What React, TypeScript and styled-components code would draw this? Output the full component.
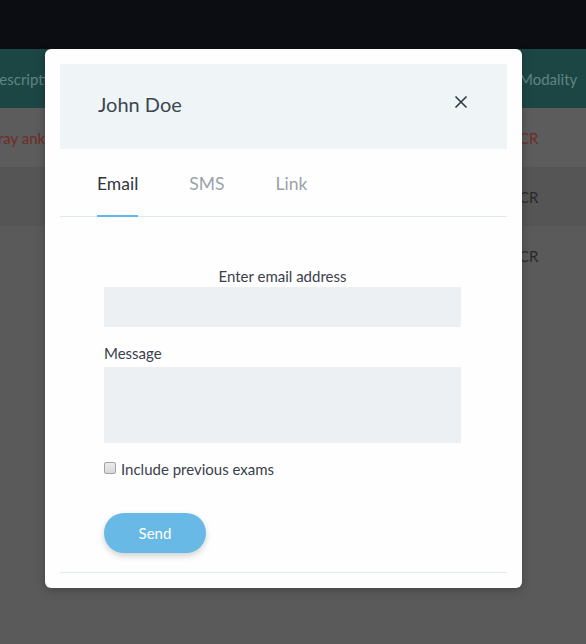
import React from "react";
import styled, { createGlobalStyle } from "styled-components";

const Global = createGlobalStyle`
  html, body { margin: 0; padding: 0; }
  body {
    width: 586px;
    height: 644px;
    overflow: hidden;
    background: #5a5a5a;
    font-family: Lato, "Open Sans", sans-serif;
  }
`;

const Page = styled.div`
  position: relative;
  width: 586px;
  height: 644px;
  overflow: hidden;
  background: #5a5a5a;
`;

const TopBar = styled.div`
  height: 49px;
  background: #0b0d13;
`;

const Row = styled.div<{ $bg: string; $h: number }>`
  display: flex;
  align-items: center;
  justify-content: space-between;
  height: ${(p) => p.$h}px;
  background: ${(p) => p.$bg};
  font-size: 15px;
`;

const Cell = styled.span<{ $color: string; $shift?: number }>`
  color: ${(p) => p.$color};
  margin-left: ${(p) => p.$shift ?? 0}px;
  white-space: nowrap;
`;

const EndCell = styled.span<{ $color: string }>`
  color: ${(p) => p.$color};
  width: 67px;
  white-space: nowrap;
`;

const Modal = styled.div`
  position: absolute;
  top: 49px;
  left: 45px;
  width: 477px;
  box-sizing: border-box;
  padding: 15px;
  background: #fefefe;
  border-radius: 6px;
  box-shadow: 0 2px 10px rgba(0, 0, 0, 0.25);
`;

const Header = styled.div`
  height: 85px;
  background: #eff4f7;
  display: flex;
  align-items: center;
  justify-content: space-between;
  padding: 0 39px 0 38px;
  box-sizing: border-box;
`;

const Title = styled.h2`
  margin: 0;
  font-size: 20px;
  font-weight: 400;
  color: #3d4550;
  padding-bottom: 6px;
`;

const Close = styled.button`
  border: 0;
  background: transparent;
  padding: 0;
  width: 14px;
  height: 14px;
  margin-bottom: 10px;
  display: flex;
  cursor: pointer;
`;

const Tabs = styled.div`
  display: flex;
  padding-left: 37px;
  height: 68px;
  border-bottom: 1px solid #e1e8ee;
  box-sizing: border-box;
`;

const Tab = styled.div<{ $active?: boolean }>`
  display: flex;
  align-items: center;
  margin-right: 51px;
  font-size: 17.5px;
  padding-top: 2px;
  color: ${(p) => (p.$active ? "#2f3640" : "#9aa2aa")};
  border-bottom: 2px solid ${(p) => (p.$active ? "#62b8e6" : "transparent")};
  margin-bottom: -1px;
`;

const Body = styled.form`
  display: flex;
  flex-direction: column;
  padding: 51px 46px 19px 44px;
  border-bottom: 1px solid #e1e8ee;
`;

const Label = styled.label<{ $center?: boolean; $gap: number }>`
  font-size: 15px;
  line-height: 17px;
  color: #3a414b;
  text-align: ${(p) => (p.$center ? "center" : "left")};
  margin-bottom: ${(p) => p.$gap}px;
`;

const Input = styled.input`
  box-sizing: border-box;
  height: 40px;
  padding: 0 10px;
  border: 0;
  background: #ecf0f3;
  margin: 0 0 18px;
`;

const TextArea = styled.textarea`
  box-sizing: border-box;
  height: 76px;
  padding: 8px 10px;
  border: 0;
  background: #ecf0f3;
  resize: none;
  margin: 0 0 18px;
`;

const CheckRow = styled.label`
  display: flex;
  align-items: center;
  gap: 5px;
  font-size: 15px;
  line-height: 17px;
  color: #3a414b;
  margin-bottom: 35px;
`;

const Check = styled.input`
  appearance: none;
  box-sizing: border-box;
  margin: 0 0 4px;
  width: 12px;
  height: 12px;
  border: 1px solid #a3a3a3;
  border-radius: 2px;
  background: linear-gradient(#ececec, #d8d8d8);
`;

const Send = styled.button`
  width: 102px;
  height: 40px;
  border: 0;
  border-radius: 20px;
  background: #68b9e5;
  color: #ffffff;
  font-family: Lato, sans-serif;
  font-size: 15px;
  box-shadow: 0 3px 6px rgba(0, 0, 0, 0.18);
  cursor: pointer;
`;

export default function App() {
  return (
    <Page>
      <Global />
      <TopBar />
      <Row $bg="#1c4644" $h={59}>
        <Cell $color="#5f8482" $shift={-12}>Description</Cell>
        <EndCell $color="#5f8482">Modality</EndCell>
      </Row>
      <Row $bg="#5c5c5c" $h={59}>
        <Cell $color="#6e2c27" $shift={-17}>X-ray ankle</Cell>
        <EndCell $color="#6e2c27">CR</EndCell>
      </Row>
      <Row $bg="#555555" $h={59}>
        <Cell $color="#2a2a2a" $shift={-17}></Cell>
        <EndCell $color="#2a2a2a">CR</EndCell>
      </Row>
      <Row $bg="#5a5a5a" $h={59}>
        <Cell $color="#2a2a2a" $shift={-17}></Cell>
        <EndCell $color="#2a2a2a">CR</EndCell>
      </Row>

      <Modal>
        <Header>
          <Title>John Doe</Title>
          <Close aria-label="Close">
            <svg width="14" height="14" viewBox="0 0 14 14">
              <path d="M1.5 1.5 L12.5 12.5 M12.5 1.5 L1.5 12.5" stroke="#2b3a44" strokeWidth="1.6" fill="none" />
            </svg>
          </Close>
        </Header>
        <Tabs>
          <Tab $active>Email</Tab>
          <Tab>SMS</Tab>
          <Tab>Link</Tab>
        </Tabs>
        <Body onSubmit={(e) => e.preventDefault()}>
          <Label $center $gap={2}>Enter email address</Label>
          <Input type="email" />
          <Label $gap={5}>Message</Label>
          <TextArea />
          <CheckRow>
            <Check type="checkbox" />
            Include previous exams
          </CheckRow>
          <div>
            <Send type="submit">Send</Send>
          </div>
        </Body>
      </Modal>
    </Page>
  );
}
